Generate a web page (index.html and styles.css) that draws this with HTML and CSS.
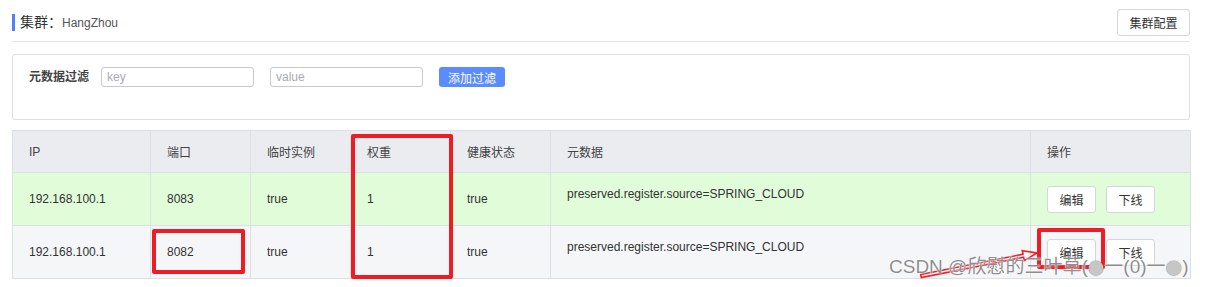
FILE: index.html
```html
<!DOCTYPE html>
<html lang="zh-CN">
<head>
  <meta charset="UTF-8">
  <title>集群 - HangZhou</title>
  <link rel="stylesheet" href="styles.css">
</head>
<body>

  <!-- Cluster header -->
  <div class="cluster-head">
    <div class="cluster-title">集群：<span class="cluster-name">HangZhou</span></div>
    <button class="btn">集群配置</button>
  </div>

  <!-- Metadata filter -->
  <div class="filter-box">
    <span class="filter-label">元数据过滤</span>
    <input type="text" class="filter-input" placeholder="key">
    <input type="text" class="filter-input" placeholder="value">
    <button class="btn-primary">添加过滤</button>
  </div>

  <!-- Instance table -->
  <div class="table-wrap">
    <table class="inst-table">
      <colgroup>
        <col class="c-ip"><col class="c-n"><col class="c-n"><col class="c-n"><col class="c-n"><col class="c-meta"><col class="c-op">
      </colgroup>
      <thead>
        <tr>
          <th>IP</th>
          <th>端口</th>
          <th>临时实例</th>
          <th>权重</th>
          <th>健康状态</th>
          <th>元数据</th>
          <th>操作</th>
        </tr>
      </thead>
      <tbody>
        <tr class="row-up">
          <td>192.168.100.1</td>
          <td>8083</td>
          <td>true</td>
          <td>1</td>
          <td>true</td>
          <td class="meta">preserved.register.source=SPRING_CLOUD</td>
          <td><button class="btn btn-sm">编辑</button><button class="btn btn-sm">下线</button></td>
        </tr>
        <tr class="row-alt">
          <td>192.168.100.1</td>
          <td>8082</td>
          <td>true</td>
          <td>1</td>
          <td>true</td>
          <td class="meta">preserved.register.source=SPRING_CLOUD</td>
          <td><button class="btn btn-sm">编辑</button><button class="btn btn-sm">下线</button></td>
        </tr>
      </tbody>
    </table>

    <!-- annotations -->
    <div class="mark mark-port"></div>
    <div class="mark mark-weight"></div>
    <div class="mark mark-edit"></div>
  </div>

  <svg class="arrow" width="1207" height="287" viewBox="0 0 1207 287">
    <polygon points="920.7,274.5 1023,254.2 1022.3,250.8 1037,253 1024.3,260.6 1023.6,257.2 921.3,277.5"
             fill="none" stroke="#ee1c25" stroke-width="1.6" stroke-linejoin="miter"/>
  </svg>

  <div class="watermark">CSDN @欣慰的三叶草(<span class="dot">●</span>一(0)一<span class="dot">●</span>)</div>

</body>
</html>
```

FILE: styles.css
```css
* {
  margin: 0;
  padding: 0;
  box-sizing: border-box;
}

body {
  font-family: "Liberation Sans", "Noto Sans CJK SC", sans-serif;
  font-size: 12px;
  color: #333;
  background: #fff;
  padding: 0 17px 0 12px;
  width: 1207px;
  height: 287px;
  overflow: hidden;
  position: relative;
}

/* header */
.cluster-head {
  display: flex;
  justify-content: space-between;
  align-items: center;
  padding: 9px 0 5px;
  border-bottom: 1px solid #e3e5ea;
}

.cluster-title {
  border-left: 3px solid #4e7ffe;
  padding-left: 5px;
  font-size: 14px;
  line-height: 16px;
  color: #333;
}

.cluster-name {
  font-size: 12px;
  color: #555;
}

.btn {
  font-family: inherit;
  font-size: 12px;
  color: #333;
  background: #fff;
  border: 1px solid #d3d6dd;
  border-radius: 3px;
  height: 27px;
  width: 73px;
  cursor: pointer;
}

/* filter */
.filter-box {
  margin-top: 12px;
  height: 66px;
  border: 1px solid #dcdfe6;
  border-radius: 3px;
  padding: 12px 0 0 16px;
  display: flex;
  align-items: flex-start;
}

.filter-label {
  font-weight: bold;
  color: #444;
  line-height: 20px;
  margin-right: 12px;
}

.filter-input {
  width: 153px;
  height: 20px;
  border: 1px solid #c6c9d1;
  border-radius: 3px;
  padding: 0 5px;
  font-family: inherit;
  font-size: 12px;
  margin-right: 16px;
}

.filter-input::placeholder {
  color: #a8abb2;
}

.btn-primary {
  width: 66px;
  height: 20px;
  border: none;
  border-radius: 3px;
  background: #5b8cff;
  color: #fff;
  font-family: inherit;
  font-size: 12px;
}

/* table */
.table-wrap {
  position: relative;
  margin-top: 10px;
}

.inst-table {
  width: 1178px;
  border-collapse: collapse;
  table-layout: fixed;
  border: 1px solid #dcdfe6;
}

.c-ip { width: 138px; }
.c-n { width: 100px; }
.c-meta { width: 480px; }
.c-op { width: 160px; }

.inst-table th,
.inst-table td {
  border: 1px solid #dcdfe6;
  text-align: left;
  padding: 0 16px;
  font-weight: normal;
  vertical-align: middle;
}

.inst-table th {
  background: #ebecf0;
  height: 42px;
  color: #444;
}

.inst-table td {
  height: 53px;
}

.row-up td {
  background: #e1fcd9;
}

.row-alt td {
  background: #f5f6f8;
}

.inst-table td.meta {
  vertical-align: top;
  padding-top: 12px;
  line-height: 18px;
}

.btn-sm {
  width: 49px;
  height: 27px;
  margin-right: 10px;
}

/* annotations */
.mark {
  position: absolute;
  border: 4px solid #ee1c25;
  border-radius: 2px;
}

.mark-port {
  left: 140px;
  top: 99px;
  width: 93px;
  height: 45px;
}

.mark-weight {
  left: 339px;
  top: 4px;
  width: 102px;
  height: 145px;
}

.mark-edit {
  left: 1025px;
  top: 98px;
  width: 68px;
  height: 41px;
}

.arrow {
  position: absolute;
  left: 0;
  top: 0;
  pointer-events: none;
}

.watermark {
  position: absolute;
  left: 889px;
  top: 255px;
  font-size: 19px;
  line-height: 24px;
  color: rgba(120, 120, 120, 0.85);
  text-shadow: 0 0 2px #fff, 0 0 1px #fff;
  white-space: nowrap;
}

.watermark .dot {
  font-family: "DejaVu Sans", sans-serif;
  font-size: 19px;
  line-height: 20px;
  color: rgba(205, 205, 205, 0.95);
  text-shadow: 0 0 1px #666;
}
```
